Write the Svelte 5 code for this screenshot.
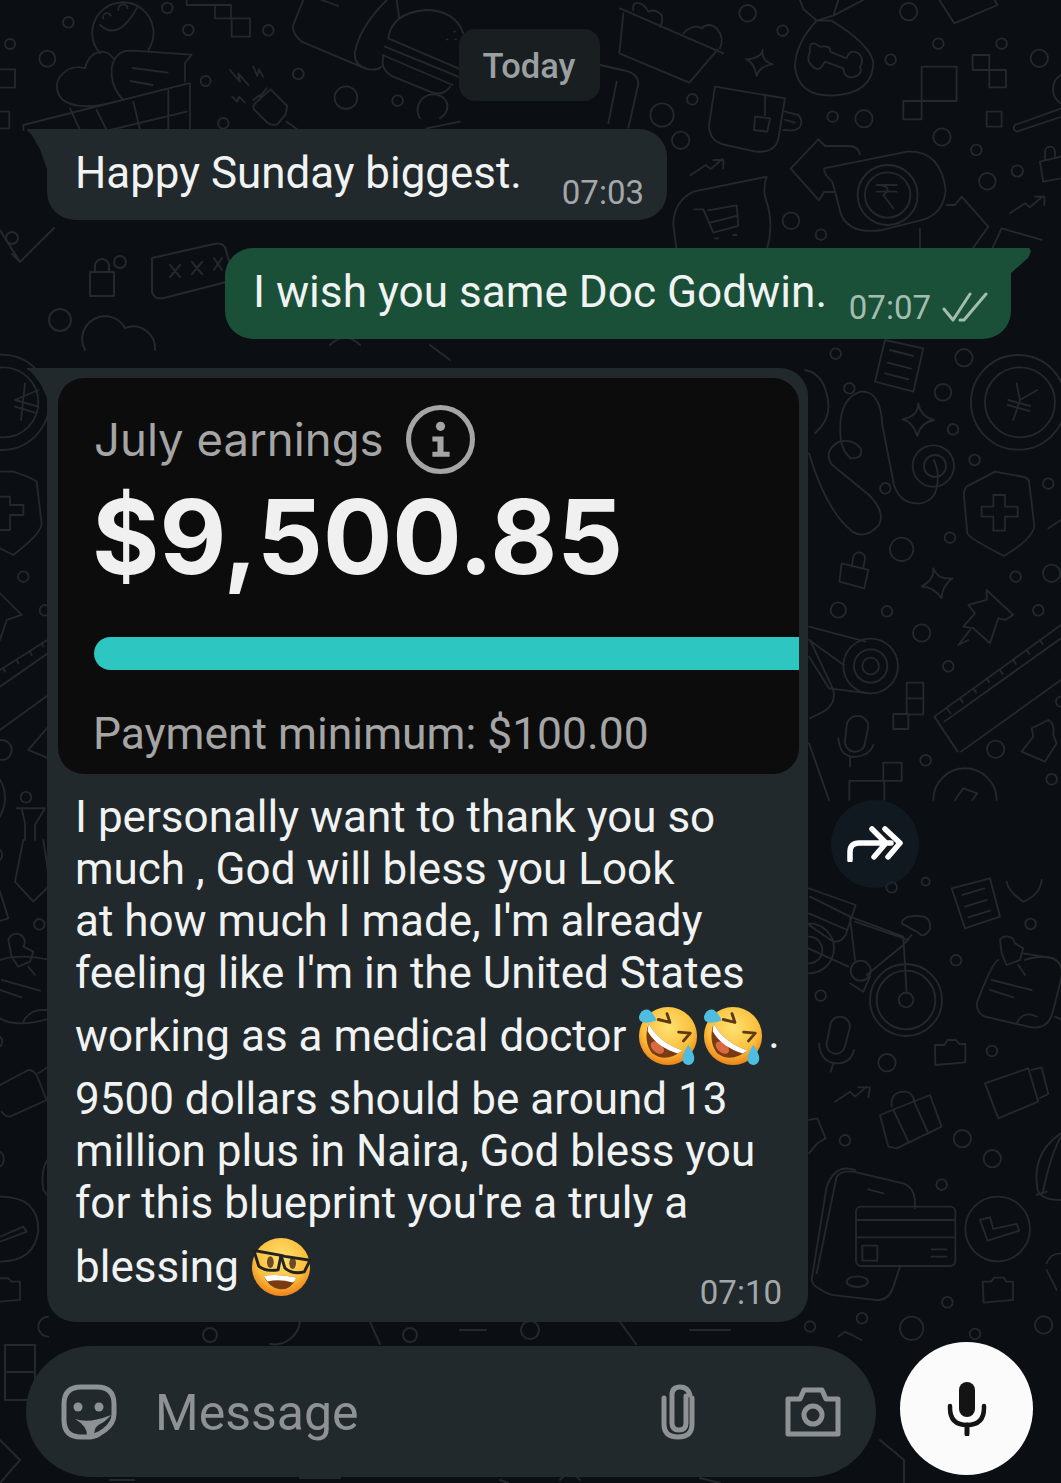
<script lang="ts">
	const messageLines = [
		{ text: 'I personally want to thank you so' },
		{ text: 'much , God will bless you Look' },
		{ text: "at how much I made, I'm already" },
		{ text: "feeling like I'm in the United States" },
		{ text: 'working as a medical doctor', emoji: 'rofl' },
		{ text: '9500 dollars should be around 13' },
		{ text: 'million plus in Naira, God bless you' },
		{ text: "for this blueprint you're a truly a" },
		{ text: 'blessing', emoji: 'nerd' }
	];

	// wallpaper tiles, drawn at 3x and scaled down by the group transform
	const tiles = [
		{
			x: 0,
			y: 0,
			dots: [
				[205, 67, 16], [30, 132, 15], [142, 176, 24], [502, 24, 16], [565, 90, 16], [805, 91, 16], [617, 243, 15],
				[895, 222, 16], [1038, 293, 34], [1193, 302, 16], [670, 370, 16]
			],
			paths: [
				'M0 208 h45 v55 h-45 M0 335 h28 v50 h-28',
				'M560 0 v15 h85 v40 h50 v55 h55 v-55 h-55 M645 15 h48 v40',
				'M300 160 a92 92 0 1 1 145 -10 M300 75 q55 50 110 -50 M310 55 a10 10 0 0 1 22 -8 M355 30 a12 12 0 0 1 28 -5',
				'M340 175 c-20 -30 -70 -30 -85 30 c-50 -15 -100 30 -80 75 c15 40 90 50 170 25',
				'M370 300 c-40 -40 -50 -110 -10 -140 c10 -8 20 -8 40 -8 l175 12 l-20 25 v55 M398 204 l105 14 M392 243 l65 12',
				'M70 375 l495 -125 M570 250 v140 M505 270 v120 M400 305 l20 85 M290 330 l30 60 M210 325 l30 65 M330 390 l230 -55 M70 375 v15',
				'M690 210 l30 35 l-5 -25 l30 35 M760 200 l12 28 l5 -20 l12 22 M697 290 l15 15 l5 -15 l18 18',
				'M812 268 l50 50 l-5 25 l-25 30 q-15 5 -30 -5 l-40 -40 q-5 -10 5 -20 Z M800 265 l-20 25 M780 285 l-20 15 M860 365 l35 25',
				'M910 0 l-30 75 q-5 25 25 50 l190 80 q30 10 50 -5 M965 0 l50 18 M1160 0 q-80 80 -95 155 q-5 40 35 50 M1190 0 l8 55',
				'M1165 115 q10 -75 110 -85 q90 0 115 70 M1165 115 l210 90 M1155 140 l220 90 M1148 165 l210 90 M1150 170 q-10 40 30 60 l110 45 q40 15 60 -15 M1340 118 h3 M1362 95 h3 M1365 118 h3',
				'M1260 355 a40 40 0 1 1 80 -50 q10 30 -20 50 M1280 385 l100 -20'
			]
		},
		{
			x: 600,
			y: 0,
			dots: [
				[443, 40, 25], [548, 92, 16], [926, 35, 26], [872, 179, 16], [1015, 131, 16], [1205, 131, 16], [1318, 175, 26],
				[277, 298, 16], [186, 345, 35], [242, 421, 26], [698, 350, 16], [792, 356, 26], [1026, 411, 26], [1129, 450, 16],
				[1252, 513, 17], [1162, 544, 25], [573, 662, 25], [663, 704, 16], [863, 585, 90], [863, 585, 68]
			],
			paths: [
				'M60 25 l310 135 M70 40 l-12 120 l210 88 l85 -100 M100 30 q-5 -25 20 -20 q15 5 25 25 q20 -10 40 10 q5 20 -5 35 M250 100 q30 -30 55 -15 q20 -20 45 0 q25 30 10 60',
				'M650 62 q-65 70 -65 140 q10 85 110 85 q125 -5 125 -100 q-10 -55 -125 -125 Z M650 62 l-40 -35 l-10 -27 M650 62 l50 -15 l90 -47 M700 47 l15 -47',
				'M660 140 q-35 -25 -30 15 q-15 30 15 50 q15 10 30 -20 l55 20 q5 35 35 25 q25 -10 15 -30 q15 -25 -5 -40 q-25 -15 -35 15 l-50 -20 q5 -20 -30 -15',
				'M488 150 q-5 25 -50 28 q25 8 32 50 q8 -30 48 -35 q-35 -10 -30 -43',
				'M965 200 h105 v103 h-105 Z M910 303 h55 v55 h-55 Z M1118 165 h50 v45 h-50 Z M1168 210 h50 v52 h-50 Z M1160 335 h45 v45 h-45 Z',
				'M1245 375 l140 -50 M1250 395 l135 -45 M1245 375 a12 12 0 0 0 5 20 M1383 225 a50 50 0 0 0 0 85 M1018 0 l45 70 l130 -55 l-10 -15',
				'M345 260 l210 35 l-18 110 q-5 55 -70 50 l-90 -20 q-50 -10 -50 -60 Z M495 290 v55 M465 350 l45 5 l-8 40 l-40 -5 Z M555 335 l40 10 q15 15 5 35 q-10 15 -50 10 M555 360 l30 8',
				'M0 195 l80 18 q35 10 35 40 l-30 130 M50 245 l-25 125',
				'M272 525 l45 -30 l15 12 l35 -30 M340 480 h30 v25',
				'M655 418 l-83 88 l85 95 l15 -25 h30 M655 418 l20 20 h70 q30 0 35 25',
				'M672 505 l250 -50 q100 -5 115 115 q-5 70 -70 90 l-120 30 q-100 15 -125 -50 q-15 -60 -25 -95 q-25 -20 -25 -40 Z M830 555 h60 M830 575 h60 M840 555 q40 10 10 30 l30 40',
				'M500 530 l-220 45 q-60 30 -60 100 q5 40 10 75 M500 530 q-10 25 -5 60 q30 80 5 160 M282 628 h28 l30 70 l75 -20 l-5 -62 l-85 15 M330 668 l80 -20 M345 715 h10 M400 705 h10',
				'M1230 640 l45 -30 l15 12 l35 -30 M1305 590 h28 v25 M1320 485 l63 -15 M1320 485 l10 60 l53 -10 M1335 480 v-25 a15 15 0 0 1 30 0 v18',
				'M960 685 v65 M1040 615 h25 l20 -25 l80 90 l-50 70 M1175 750 l30 -65 l120 35'
			]
		},
		{
			x: 805,
			y: 340,
			dots: [
				[92, 41, 16], [133, 145, 16], [477, 53, 26], [414, 157, 25], [444, 268, 16], [509, 360, 16], [241, 445, 16],
				[730, 431, 16], [435, 593, 16], [290, 628, 35], [632, 710, 16], [740, 700, 26], [246, 814, 16], [350, 879, 26],
				[700, 811, 16], [430, 979, 16], [572, 1228, 26], [362, 1261, 16], [740, 1318, 16], [100, 810, 23],
				[640, 187, 142], [645, 187, 105], [385, 378, 62], [390, 378, 33], [197, 978, 82], [197, 978, 50], [197, 978, 25]
			],
			paths: [
				'M240 0 l115 25 l-30 130 l-115 -30 Z M255 30 l70 18 M248 68 l70 18 M240 100 l70 18',
				'M635 130 l10 50 l-20 60 M697 150 l-52 30 M610 180 l65 18 M608 195 l65 18',
				'M0 90 q60 10 70 100 q5 50 -40 90 M12 340 q50 170 130 235 q40 25 80 -20 q20 -40 -30 -90 l-110 -90 q-30 -40 20 -70 q40 -10 65 20 q10 30 -30 30 q-25 -20 -30 -60 q-10 -120 60 -140 q60 -5 65 100 l35 180 q20 60 80 55 q60 -10 50 -100 l-10 -30',
				'M340 190 q0 40 -48 48 q30 5 45 50 q10 -40 50 -48 q-40 -10 -47 -50',
				'M570 395 l-85 45 q-10 10 -8 30 l10 110 q5 15 110 68 q100 -60 90 -100 l-15 -125 q-5 -10 -15 -12 Z M565 465 h35 v35 h38 v30 h-38 v42 h-35 v-42 h-35 v-30 h35 Z',
				'M110 670 l80 20 l-12 55 l-75 -20 Z M140 680 l5 -30 a18 18 0 0 1 35 8 l-5 25',
				'M385 685 q5 30 -35 55 q35 0 60 35 q0 -35 32 -60 q-45 5 -57 -30',
				'M545 750 l80 75 l-25 15 l-20 -5 l-25 75 l-50 -45 l-30 -5 l35 -40 l-20 -25 l55 -15 Z M495 870 l-35 45 l30 -15',
				'M768 855 l-380 275 l70 105 M768 895 l-350 250 M768 1020 l-300 215 M425 1105 l12 15 M465 1075 l8 12 M505 1045 l8 12 M545 1015 l8 12 M585 990 l8 12 M625 960 l8 12 M665 930 l8 12 M705 900 l8 12',
				'M730 1140 q20 10 15 45 l10 25 l-35 55 l-70 -30 l35 -45 l-5 -25 Z',
				'M12 860 l170 45 M12 900 l105 75 M12 950 l60 95 l120 15 M15 900 l70 150 q10 40 -30 65 l-40 20',
				'M125 1160 a30 30 0 0 1 65 0 l-10 50 a30 30 0 0 1 -60 -10 Z M100 1195 q5 60 55 55 q40 -5 50 -35 M135 1250 v30',
				'M305 1028 h50 v95 h-50 Z M305 1075 h50 M265 1122 h45 v45 h-45 Z M235 1268 h55 v55 h-55 Z M133 1323 h105 v57 M133 1323 v57',
				'M385 1380 a95 95 0 0 1 190 0 M450 1380 l25 -35 l42 15 l-15 20 M730 565 l38 -25 M768 1070 a14 14 0 0 0 0 30 M12 1210 l60 170'
			]
		},
		{
			x: 805,
			y: 880,
			dots: [
				[260, 22, 16], [362, 5, 12], [677, 132, 16], [453, 241, 16], [47, 347, 16], [561, 513, 16], [246, 548, 26],
				[120, 781, 16], [472, 776, 26], [562, 836, 26], [410, 914, 16], [427, 1267, 16], [171, 1315, 16], [15, 1340, 16],
				[320, 1345, 35], [510, 1362, 16], [716, 1335, 26], [303, 360, 108], [303, 360, 88], [303, 360, 22], [167, 272, 30],
				[578, 1047, 97]
			],
			paths: [
				'M440 25 l115 -30 l30 115 l-105 35 Z M473 45 l65 -20 M480 80 l65 -20 M490 112 l65 -20 M605 5 q5 30 50 60 q50 -20 55 -65',
				'M305 340 l-10 -170 l-160 -60 l-120 -60 M135 110 l15 130 M150 125 l160 55 M295 195 l-110 90 M320 165 l-25 30 M290 130 q5 -25 50 -22 q40 0 35 40 q-20 30 -35 10 Z M130 260 l-120 -55 M135 310 l40 25 l20 -45',
				'M12 25 l140 50 l-30 90 q-20 30 -45 15 l-65 -45 M12 100 l115 50 M12 130 a75 75 0 0 1 0 150 M12 170 a40 40 0 0 1 0 80',
				'M580 240 q-20 10 -65 130 q0 30 25 40 l130 30 q60 15 75 -50 l25 -100 q5 -40 -25 -55 l-90 -15 M560 300 l120 30 M555 330 l70 22 M635 430 q20 -40 60 -20',
				'M585 180 a25 25 0 0 1 45 10 l25 15 l-10 35 l-40 15 l-15 -35 Z M640 255 l20 30 M660 240 q80 -25 108 15 M750 410 l18 8',
				'M75 440 a30 30 0 0 1 60 0 l-15 60 a28 28 0 0 1 -55 -10 Z M42 490 q5 60 55 60 q40 0 50 -40 M85 550 l-8 25',
				'M90 665 l45 -30 l15 15 l35 -30 M160 622 h35 l-5 30',
				'M390 495 h28 l10 -15 h25 l10 12 h18 v55 l-90 8 Z M533 1205 h25 l10 -12 h28 l8 12 h20 v55 l-88 8 Z',
				'M540 610 l130 -45 l30 100 l-120 50 Z M680 570 l30 -8 l20 80 l-25 12',
				'M225 705 l150 -60 l35 95 l-135 65 l-25 -5 Z M260 680 q-5 -45 40 -45 q20 0 30 30 M265 690 l45 95 M325 660 l45 100',
				'M150 870 q-60 -20 -85 50 l-45 280 q0 20 60 45 l130 15 q40 5 55 -40 l20 -60 M35 1180 l60 -290 q15 -20 50 -15 l150 35 q30 10 35 50 v25 M190 928 l45 12',
				'M168 980 h268 a15 15 0 0 1 15 15 v148 a15 15 0 0 1 -15 15 h-268 a15 15 0 0 1 -15 -15 v-148 a15 15 0 0 1 15 -15 Z M153 1020 h298 M153 1072 h298 M172 1097 h45 v45 h-45 Z M380 1108 h45 M380 1130 h45',
				'M125 1205 a32 16 0 1 0 64 0 a32 16 0 1 0 -64 0',
				'M525 1020 l30 -8 l10 35 l70 -15 l8 20 l-95 30 Z',
				'M768 760 q-90 60 -70 170 q10 30 70 30 M768 770 q-30 50 -55 170 M695 945 l30 -10 M725 1150 q10 -30 43 -30 M725 1170 l30 60',
				'M12 720 l25 -5 l25 60 l-25 15 l-25 30 M100 1370 l20 -15 l50 25'
			]
		},
		{
			x: 0,
			y: 340,
			dots: [[5, 187, 143], [10, 187, 105], [70, 710, 16], [135, 811, 16], [5, 1230, 30], [78, 1372, 16]],
			paths: [
				'M75 130 l-12 110 M115 150 l-70 30 M45 180 l70 20 M45 200 l60 18',
				'M0 395 h40 q60 20 70 30 l15 125 q0 30 -85 95 l-40 -20 M0 470 h30 v25 h40 v30 h-40 v45 h-30',
				'M0 760 l65 65 l-45 15 l-20 60',
				'M0 990 l150 -95 M0 1040 l150 -105 M10 985 l5 10 M50 960 l5 10 M90 935 l5 10 M125 910 l5 10 M0 1170 l145 -105',
				'M145 1160 l-60 70 l60 25 M0 1320 q30 50 0 110 M50 1405 h85 l-30 50 v45 M75 1450 l-10 -45 M75 1450 v50'
			]
		},
		{
			x: 0,
			y: 840,
			dots: [[118, 253, 16]],
			paths: [
				'M70 0 l-25 125 l55 60 l50 -50 l-20 -135 M0 155 l25 80 l-25 8 M0 30 a20 20 0 0 1 0 30',
				'M25 300 a25 25 0 1 1 45 20 l30 15 l-10 30 l-35 15 l-20 -30 Z M85 380 l20 25 M0 360 q60 -20 150 0',
				'M5 420 l115 32 M0 450 l65 22 M0 535 q50 30 150 0 M70 545 q20 -40 70 -35 M0 590 a20 20 0 0 1 0 30',
				'M0 735 l85 -45 q15 0 25 15 l30 75 l-110 50 q-15 0 -25 -15 M115 700 l30 -20',
				'M0 935 a28 28 0 0 1 0 45 M0 1070 q115 0 115 100 q-10 95 -115 95 M0 1190 l70 -30 l10 15 l-80 30',
				'M0 1315 h25 l10 10 h25 v55 l-60 5 M150 950 q-30 30 -20 100 l15 20 M145 1430 a30 30 0 0 0 0 60'
			]
		}
	];

	const looseDots = [
		[60, 320, 11], [120, 262, 6], [12, 238, 6], [210, 1335, 7], [410, 1335, 7], [530, 1330, 9]
	];

	const looseDoodles = [
		'M0 230 l20 32 l34 -34 M20 262 l-8 -8',
		'M152 258 l62 -14 q10 -2 12 6 l8 30 l-70 18 q-10 2 -12 -6 Z M170 265 l10 12 M180 265 l-10 12 M192 262 l10 12 M202 262 l-10 12 M214 258 l8 12 M222 258 l-8 12',
		'M90 272 h24 v24 h-24 Z M95 272 v-6 a7 7 0 0 1 14 0 v6',
		'M85 350 a22 22 0 0 1 40 -22 a22 22 0 0 1 30 22 M330 345 q15 -15 30 0 M430 345 l20 15',
		'M5 1345 h30 v55 h-30 Z M5 1372 h30 M0 1440 l20 20 l-20 23',
		'M300 1322 a26 26 0 0 1 -30 22 M370 1322 l10 22 M460 1330 h26 M620 1322 l16 22 M690 1330 h40',
		'M880 1440 l24 20 v25 M300 1478 h40 M560 1480 a12 12 0 0 1 20 0 M700 1478 l20 5 M110 1480 h24 M500 1480 l8 3'
	];
</script>

{#snippet rofl()}
	<svg class="emoji" viewBox="0 0 64 64" aria-hidden="true">
		<circle cx="32" cy="32" r="30" fill="url(#face)" />
		<path d="M12 19 Q22 38 47 47 Q30 60 16 50 Q6 38 12 19Z" fill="#7a3b12" />
		<ellipse cx="21" cy="44" rx="8" ry="5" transform="rotate(40 21 44)" fill="#d9693f" />
		<path d="M12 19 Q22 38 47 47 L42 50 Q20 43 11 27Z" fill="#fff" />
		<path d="M22 15 L34 18 L31 9" fill="none" stroke="#5b3a12" stroke-width="3" stroke-linecap="round" stroke-linejoin="round" />
		<path d="M43 28 L55 29 L48 37" fill="none" stroke="#5b3a12" stroke-width="3" stroke-linecap="round" stroke-linejoin="round" />
		<path d="M2 12 Q5 3 12 5 Q18 9 20 16 Q12 19 7 18 Q2 17 2 12Z" fill="#4fbde0" />
		<path d="M53 41 Q60 52 59 56 A6 6 0 0 1 47 56 Q47 50 53 41Z" fill="#4fbde0" />
	</svg>
{/snippet}

{#snippet nerd()}
	<svg class="emoji" viewBox="0 0 64 64" aria-hidden="true">
		<circle cx="32" cy="32" r="30" fill="url(#face)" />
		<path d="M14 41 Q32 39 48 43 Q42 56 31 55 Q20 54 14 41Z" fill="#7a3b12" />
		<path d="M14 41 Q32 39 48 43 Q46 47 44 48 Q30 44 18 47Z" fill="#fff" />
		<ellipse cx="21" cy="27" rx="3.500" ry="6" fill="#6e4a24" />
		<ellipse cx="44" cy="28" rx="3.500" ry="6" fill="#6e4a24" />
		<g fill="none" stroke="#222" stroke-width="3" stroke-linejoin="round">
			<path d="M4 15 L32 20 L29 35 Q16 37 9 31Z" />
			<path d="M32 20 L36 21 L62 25 L56 37 Q44 40 36 33Z" />
		</g>
	</svg>
{/snippet}

<div class="screen">
	<svg class="wallpaper" width="1061" height="1483" viewBox="0 0 1061 1483" aria-hidden="true">
		<defs>
			<radialGradient id="face" cx="50%" cy="35%" r="62%">
				<stop offset="0" stop-color="#fde272" />
				<stop offset=".7" stop-color="#fbbf3c" />
				<stop offset="1" stop-color="#ee8a1e" />
			</radialGradient>
		</defs>
		{#each tiles as tile}
			<g class="tile" transform="translate({tile.x} {tile.y}) scale(0.3333)">
				{#each tile.paths as d}
					<path {d} />
				{/each}
				{#each tile.dots as [cx, cy, r]}
					<circle {cx} {cy} {r} />
				{/each}
			</g>
		{/each}
		{#each looseDoodles as d}
			<path {d} />
		{/each}
		{#each looseDots as [cx, cy, r]}
			<circle {cx} {cy} {r} />
		{/each}
	</svg>

	<div class="thread">
		<div class="day">Today</div>

		<div class="bubble in short">
			<span class="tail"></span>
			<span class="body">Happy Sunday biggest.</span>
			<span class="time">07:03</span>
		</div>

		<div class="bubble out short">
			<span class="tail"></span>
			<span class="body">I wish you same Doc Godwin.</span>
			<span class="time">07:07</span>
			<svg class="ticks" viewBox="0 0 46 30" aria-hidden="true">
				<path d="M2 17 L11 28 L28 2 M18 28 L22 28 L44 2" fill="none" stroke="currentColor" stroke-width="3" stroke-linecap="round" stroke-linejoin="round" />
			</svg>
		</div>

		<div class="row">
			<div class="bubble in media">
				<span class="tail"></span>
				<div class="card">
					<div class="card-head">
						<span>July earnings</span>
						<svg class="info" viewBox="0 0 68 68" aria-hidden="true">
							<circle cx="34" cy="34" r="31.500" fill="none" stroke="currentColor" stroke-width="5" />
							<circle cx="34" cy="21" r="4.500" fill="currentColor" />
							<path d="M26 31 H37 V46 H43 V51 H26 V46 H31 V36 H26Z" fill="currentColor" />
						</svg>
					</div>
					<div class="amount">$9,500.85</div>
					<div class="bar"></div>
					<div class="minimum">Payment minimum: $100.00</div>
				</div>
				<div class="caption">
					{#each messageLines as line}
						<div class="line" class:rofl={line.emoji === 'rofl'} class:nerd={line.emoji === 'nerd'}>
							<span class="words">{line.text}</span>
							{#if line.emoji === 'rofl'}
								{@render rofl()}{@render rofl()}<span class="stop">.</span>
							{:else if line.emoji === 'nerd'}
								{@render nerd()}
							{/if}
						</div>
					{/each}
				</div>
				<span class="time corner">07:10</span>
			</div>
			<button class="forward" aria-label="Forward">
				<svg viewBox="0 0 56 36" aria-hidden="true">
					<path d="M3 34 V26 Q3 17 12 17 H44 M25 3 L39 17 L27 31 M38 3 L53 17 L41 31" fill="none" stroke="currentColor" stroke-width="5.500" stroke-linecap="round" stroke-linejoin="round" />
				</svg>
			</button>
		</div>
	</div>

	<div class="composer">
		<div class="input">
			<svg class="icon sticker" viewBox="0 0 56 56" aria-hidden="true">
				<path d="M20 3 H36 Q53 3 53 20 V30 Q53 39 44 46 L38 50 Q33 53 26 53 H20 Q3 53 3 36 V20 Q3 3 20 3Z" fill="none" stroke="currentColor" stroke-width="5" />
				<circle cx="17" cy="23" r="4.500" fill="currentColor" />
				<circle cx="38" cy="23" r="4.500" fill="currentColor" />
				<path d="M14 35 Q28 40 50 31 Q44 38 39 40 Q34 42 33 50 L26 51 Q26 42 14 35Z" fill="currentColor" />
			</svg>
			<span class="placeholder">Message</span>
			<svg class="icon clip" viewBox="0 0 36 56" aria-hidden="true">
				<path d="M26 12 V39 Q26 46 19 46 Q12 46 12 39 V11 Q12 3 20 3 Q28 3 30 11 M4 14 V40 Q4 53 18 53 Q32 53 32 40 V14" fill="none" stroke="currentColor" stroke-width="5" stroke-linecap="round" />
			</svg>
			<svg class="icon camera" viewBox="0 0 56 50" aria-hidden="true">
				<path d="M3 12 H15 L19 3 H37 L41 12 H53 V47 H3Z" fill="none" stroke="currentColor" stroke-width="5" stroke-linejoin="round" />
				<circle cx="28" cy="28" r="9" fill="none" stroke="currentColor" stroke-width="5" />
			</svg>
		</div>
		<button class="mic" aria-label="Record voice message">
			<svg viewBox="0 0 40 54" aria-hidden="true">
				<rect x="12" y="0" width="16" height="35" rx="8" fill="currentColor" />
				<path d="M3 24 V26 Q3 43 20 43 Q37 43 37 26 V24" fill="none" stroke="currentColor" stroke-width="4.500" stroke-linecap="round" />
				<path d="M20 43 V52" fill="none" stroke="currentColor" stroke-width="5" stroke-linecap="round" />
			</svg>
		</button>
	</div>
</div>

<style>
	:global(body) {
		background: #0b0f13;
	}

	.screen {
		position: relative;
		width: 1061px;
		height: 1483px;
		overflow: hidden;
		background: #0b0f13;
		font-family: Roboto, 'Liberation Sans', sans-serif;
		color: #f1f3f3;
	}

	.wallpaper {
		position: absolute;
		inset: 0;
		fill: none;
		stroke: #24292c;
		stroke-width: 2;
		stroke-linejoin: round;
		stroke-linecap: round;
	}

	.tile {
		stroke-width: 5.500;
	}

	.thread {
		position: relative;
		display: flex;
		flex-direction: column;
		padding-top: 29px;
	}

	.day {
		align-self: center;
		width: 141px;
		height: 72px;
		margin-left: -3px;
		padding-top: 2px;
		box-sizing: border-box;
		display: flex;
		align-items: center;
		justify-content: center;
		border-radius: 16px;
		background: #191e21;
		color: #9ba0a2;
		font-size: 34.500px;
		font-weight: 500;
	}

	.bubble {
		position: relative;
		background: #22292c;
		border-radius: 28px;
	}

	.short {
		display: flex;
		align-items: center;
		height: 91px;
		padding: 0 23px 4px 28px;
		font-size: 43.900px;
		box-sizing: border-box;
	}

	.in.short {
		align-self: flex-start;
		margin: 28px 0 0 47px;
		width: 620px;
	}

	.out.short {
		align-self: flex-start;
		margin: 28px 0 0 225px;
		width: 786px;
		background: #1a5038;
		font-size: 44.150px;
	}

	.in {
		border-top-left-radius: 0;
	}

	.out {
		border-top-right-radius: 0;
	}

	.tail {
		position: absolute;
		top: 0;
		width: 22px;
		height: 46px;
		background: inherit;
	}

	.in .tail {
		left: -20px;
		clip-path: polygon(0 0, 100% 0, 100% 100%, 60% 45%, 20% 12%, 0 4%);
	}

	.media .tail {
		height: 34px;
	}

	.out .tail {
		right: -20px;
		height: 27px;
		clip-path: polygon(0 0, 92% 0, 100% 12%, 88% 35%, 0 100%);
	}

	.body {
		flex: 1;
		white-space: nowrap;
	}

	.time {
		font-size: 33px;
		color: #a2a7a9;
		white-space: nowrap;
		transform: translateY(20px);
	}

	.out .time {
		color: #a3bdb0;
		transform: translateY(16px);
	}

	.ticks {
		width: 46px;
		height: 30px;
		margin-left: 11px;
		color: #a3bdb0;
		transform: translateY(15px);
	}

	.row {
		display: flex;
		align-items: center;
		margin-top: 29px;
		padding-left: 47px;
		gap: 23px;
	}

	.media {
		width: 761px;
		height: 954px;
		box-sizing: border-box;
		padding: 10px 9px 0 11px;
	}

	.card {
		height: 396px;
		box-sizing: border-box;
		padding: 23px 0 0 36px;
		border-radius: 26px;
		background: #0c0c0d;
		overflow: hidden;
		font-family: Inter, Roboto, sans-serif;
	}

	.card-head {
		display: flex;
		align-items: center;
		gap: 22px;
		height: 76px;
		color: #a5a5a5;
		font-size: 45.500px;
	}

	.info {
		width: 69px;
		height: 69px;
	}

	.amount {
		margin: 2px 0 1px -2px;
		height: 116px;
		font-size: 103px;
		line-height: 116px;
		font-weight: 700;
		color: #f0f0f0;
	}

	.bar {
		margin-top: 42px;
		height: 33px;
		border-radius: 17px 0 0 17px;
		background: #2dc6c0;
	}

	.minimum {
		margin: 38px 0 0 -1px;
		color: #a5a5a5;
		font-size: 44.400px;
		font-family: Roboto, sans-serif;
	}

	.caption {
		margin-top: 17px;
		padding-left: 17px;
		font-size: 44px;
	}

	.line {
		display: flex;
		align-items: center;
		height: 52px;
		line-height: 52px;
		white-space: nowrap;
	}

	.line.rofl {
		height: 74px;
		gap: 3px;
	}

	.line.nerd {
		height: 76px;
	}

	.emoji {
		flex: none;
		width: 62px;
		height: 62px;
	}

	.words {
		margin-right: 8px;
	}

	.nerd .words {
		margin-right: 11px;
	}

	.stop {
		margin-left: 1px;
		transform: translateY(-3px);
	}

	.corner {
		position: absolute;
		right: 26px;
		bottom: 10px;
		transform: none;
	}

	.forward {
		width: 88px;
		height: 88px;
		margin-bottom: 3px;
		display: flex;
		align-items: center;
		justify-content: center;
		padding: 0;
		border: 0;
		border-radius: 50%;
		background: rgba(20, 32, 42, 0.6);
		color: #fff;
	}

	.forward svg {
		width: 56px;
		height: 36px;
	}

	.composer {
		position: absolute;
		left: 26px;
		top: 1342px;
		display: flex;
		gap: 24px;
		align-items: flex-start;
	}

	.input {
		width: 850px;
		height: 131px;
		margin-top: 4px;
		box-sizing: border-box;
		padding: 0 34px 0 35px;
		display: flex;
		align-items: center;
		border-radius: 66px;
		background: #22292c;
		color: #8e9294;
	}

	.icon {
		flex: none;
	}

	.sticker {
		width: 56px;
		height: 56px;
	}

	.placeholder {
		flex: 1;
		margin: 2px 0 0 38px;
		font-size: 50px;
	}

	.clip {
		width: 36px;
		height: 56px;
		margin-right: 89px;
	}

	.camera {
		width: 56px;
		height: 50px;
		margin-right: 1px;
	}

	.mic {
		width: 133px;
		height: 133px;
		padding: 0;
		border: 0;
		border-radius: 50%;
		display: flex;
		align-items: center;
		justify-content: center;
		background: #fbfbfb;
		color: #141414;
	}

	.mic svg {
		width: 40px;
		height: 54px;
	}
</style>
